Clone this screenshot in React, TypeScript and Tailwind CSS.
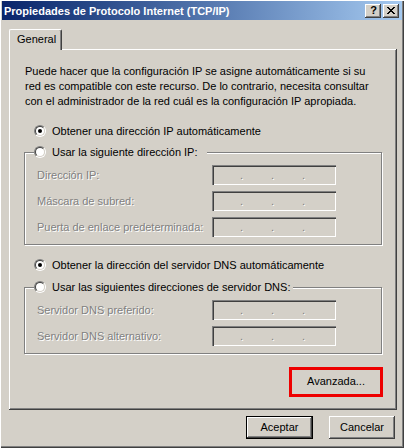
import React from "react";

const raised =
  "shadow-[inset_-1px_-1px_0_#404040,inset_1px_1px_0_#ffffff,inset_-2px_-2px_0_#808080]";
const sunken =
  "shadow-[inset_1px_1px_0_#808080,inset_2px_2px_0_#404040,inset_-1px_-1px_0_#ffffff,inset_-2px_-2px_0_#d4d0c8]";
const disabled = "text-[#808080] [text-shadow:1px_1px_0_#ffffff]";

function Radio({ checked }: { checked?: boolean }) {
  return (
    <span className="relative w-[12px] h-[12px] shrink-0 rounded-full border border-t-[#808080] border-l-[#808080] border-b-white border-r-white">
      <span className="absolute inset-0 rounded-full border border-t-[#404040] border-l-[#404040] border-b-[#d4d0c8] border-r-[#d4d0c8] bg-white flex items-center justify-center">
        {checked && <span className="w-[4px] h-[4px] rounded-full bg-black" />}
      </span>
    </span>
  );
}

function IpBox() {
  return (
    <div className={`w-[124px] h-[20px] bg-[#d4d0c8] flex leading-[20px] ${sunken}`}>
      {[0, 1, 2].map((i) => (
        <span key={i} className={`w-[31px] text-right pr-[0px] ${disabled}`}>
          .
        </span>
      ))}
    </div>
  );
}

function FieldRow({ label }: { label: string }) {
  return (
    <div className="flex items-center h-[20px]">
      <span className={`w-[187px] pl-[12px] leading-[14px] whitespace-nowrap ${disabled}`}>{label}</span>
      <IpBox />
    </div>
  );
}

function Group({
  label,
  pad,
  height,
  fields,
}: {
  label: string;
  pad: string;
  height: string;
  fields: string[];
}) {
  return (
    <div
      className={`mx-[15px] ${height} border border-[#808080] shadow-[1px_1px_0_#ffffff,inset_1px_1px_0_#ffffff]`}
    >
      <div className={`-mt-[8px] ml-[9px] w-fit ${pad} h-[14px] bg-[#d4d0c8] flex items-center`}>
        <Radio />
        <span className="ml-[6px] leading-[14px] whitespace-nowrap">{label}</span>
      </div>
      <div className="mt-[6px] flex flex-col gap-[6px]">
        {fields.map((f) => (
          <FieldRow key={f} label={f} />
        ))}
      </div>
    </div>
  );
}

function Button({ children, isDefault, w }: { children: React.ReactNode; isDefault?: boolean; w: string }) {
  return (
    <div
      className={`${w} h-[23px] bg-[#d4d0c8] flex items-center justify-center ${
        isDefault ? "border border-black" : ""
      } ${raised}`}
    >
      {children}
    </div>
  );
}

export default function App() {
  return (
    <div
      className={`w-[404px] h-[448px] bg-[#d4d0c8] pt-[1px] px-[2px] text-black text-[11px] font-['Liberation_Sans',Arial,sans-serif] shadow-[inset_1px_1px_0_#ffffff,inset_-1px_-1px_0_#404040,inset_-2px_-2px_0_#808080] overflow-hidden`}
    >
      {/* Title bar */}
      <div className="h-[19px] bg-gradient-to-r from-[#0a246a] to-[#a6caf0] flex items-center pl-[2px] pr-[3px]">
        <span className="text-white font-bold text-[11px] leading-[14px] flex-1">
          Propiedades de Protocolo Internet (TCP/IP)
        </span>
        <div className="flex gap-[2px]">
          <div className={`w-[16px] h-[14px] bg-[#d4d0c8] flex items-center justify-center ${raised}`}>
            <span className="font-bold text-[11px] leading-[11px] pl-[1px]">?</span>
          </div>
          <div className={`w-[16px] h-[14px] bg-[#d4d0c8] flex items-center justify-center ${raised}`}>
            <svg width="8" height="7" viewBox="0 0 8 7" shapeRendering="crispEdges">
              <path d="M0 0h2v1H0zM6 0h2v1H6zM1 1h2v1H1zM5 1h2v1H5zM2 2h4v1H2zM3 3h2v1H3zM2 4h4v1H2zM1 5h2v1H1zM5 5h2v1H5zM0 6h2v1H0zM6 6h2v1H6z" fill="#000" />
            </svg>
          </div>
        </div>
      </div>

      {/* Body */}
      <div className="px-[7px] pt-[9px]">
        <div className="relative z-10 w-[53px] h-[21px] -mb-[1px] bg-[#d4d0c8] border-l border-t border-l-white border-t-white border-r border-r-[#404040] rounded-tl-[2px] rounded-tr-[2px] shadow-[inset_-1px_0_0_#808080] pl-[7px] pt-[2px] leading-[14px]">
          General
        </div>
        <div className={`w-[388px] h-[361px] pt-[15px] ${raised}`}>
          <p className="pl-[16px] leading-[15px]">
            Puede hacer que la configuración IP se asigne automáticamente si su
            <br />
            red es compatible con este recurso. De lo contrario, necesita consultar
            <br />
            con el administrador de la red cuál es la configuración IP apropiada.
          </p>

          <div className="mt-[15px] ml-[25px] h-[14px] flex items-center">
            <Radio checked />
            <span className="ml-[6px] leading-[14px]">Obtener una dirección IP automáticamente</span>
          </div>

          <div className="mt-[14px]">
            <Group
              label="Usar la siguiente dirección IP:"
              pad="pr-[9px]"
              height="h-[93px]"
              fields={["Dirección IP:", "Máscara de subred:", "Puerta de enlace predeterminada:"]}
            />
          </div>

          <div className="mt-[13px] ml-[25px] h-[14px] flex items-center">
            <Radio checked />
            <span className="ml-[6px] leading-[14px]">
              Obtener la dirección del servidor DNS automáticamente
            </span>
          </div>

          <div className="mt-[15px]">
            <Group
              label="Usar las siguientes direcciones de servidor DNS:"
              pad="pr-[3px]"
              height="h-[67px]"
              fields={["Servidor DNS preferido:", "Servidor DNS alternativo:"]}
            />
          </div>

          <div className="mt-[13px] flex justify-end pr-[14px]">
            <div className="w-[94px] h-[30px] border-[3px] border-[#ee0000] bg-[#d4d0c8] flex items-center justify-center pb-[1px]">
              Avanzada...
            </div>
          </div>
        </div>

        <div className="mt-[6px] flex justify-end gap-[16px]">
          <Button isDefault w="w-[67px]">
            Aceptar
          </Button>
          <Button w="w-[66px]">Cancelar</Button>
        </div>
      </div>
    </div>
  );
}
